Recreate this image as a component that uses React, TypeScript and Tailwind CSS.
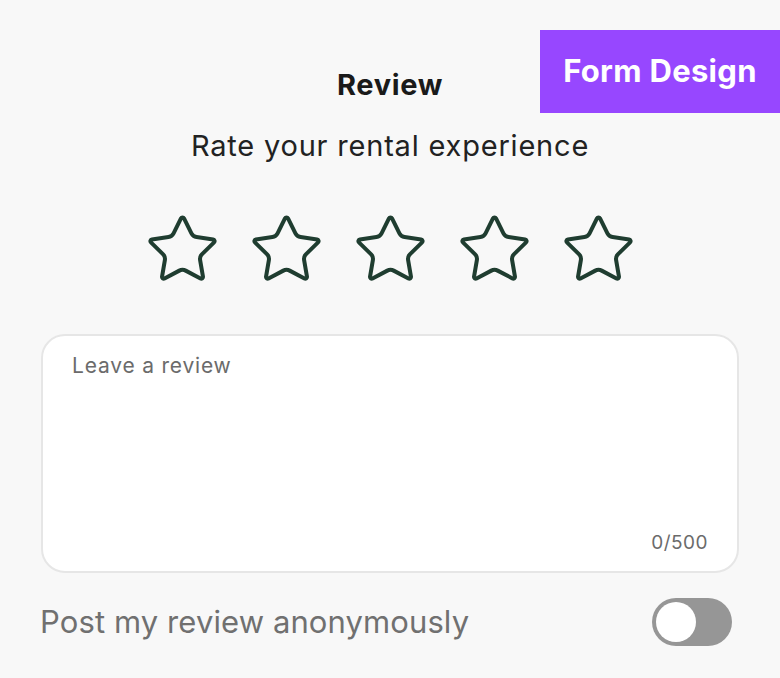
import { Star } from 'lucide-react';

const stars = [1, 2, 3, 4, 5];

export default function App() {
  return (
    <div
      className="relative w-[780px] h-[678px] bg-[#f8f8f8] overflow-hidden"
      style={{ fontFamily: 'Inter, "Noto Sans", sans-serif' }}
    >
      <div className="absolute right-0 top-[30px] w-[240px] h-[83px] bg-[#9747ff] flex items-center justify-center">
        <span className="text-white text-[31px] font-bold tracking-[0.3px]">Form Design</span>
      </div>

      <div className="flex flex-col items-center pt-[67px]">
        <h1 className="text-[29px] leading-[36px] font-bold tracking-[0.6px] text-[#1a1a1a]">Review</h1>
        <p className="mt-[25px] text-[29px] leading-[36px] tracking-[0.8px] text-[#222]">Rate your rental experience</p>

        <div className="mt-[47px] flex gap-[27px]">
          {stars.map((s) => (
            <Star key={s} size={77} strokeWidth={1.25} color="#1f3d30" />
          ))}
        </div>
      </div>

      <div className="mx-[41px] mt-[46px] h-[239px] bg-white border-2 border-[#e6e6e6] rounded-[24px] flex flex-col justify-between pl-[29px] pr-[29px] pt-[16px] pb-[16px]">
        <span className="text-[21px] leading-[28px] tracking-[0.8px] text-[#6b6b6b]">Leave a review</span>
        <span className="self-end text-[19px] leading-[24px] tracking-[0.5px] text-[#6b6b6b]">0/500</span>
      </div>

      <div className="mt-[25px] ml-[40px] mr-[48px] flex items-center justify-between h-[48px]">
        <span className="text-[31px] tracking-[0.1px] text-[#707070]">Post my review anonymously</span>
        <div className="w-[80px] h-[48px] rounded-full bg-[#969696] flex items-center px-[4px]">
          <div className="w-[40px] h-[40px] rounded-full bg-white" />
        </div>
      </div>
    </div>
  );
}
